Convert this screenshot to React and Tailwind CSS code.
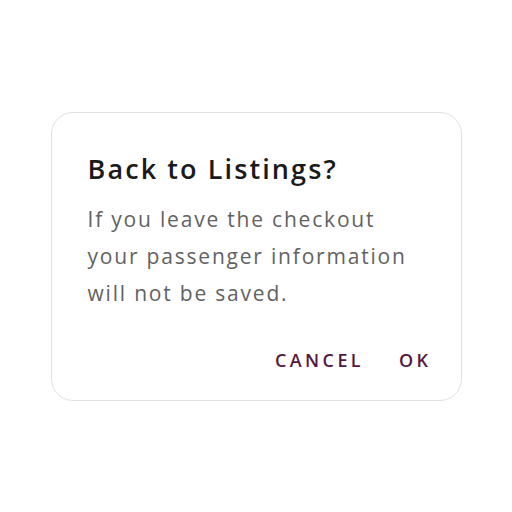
export default function App() {
  return (
    <div className="w-[512px] h-[512px] bg-white flex items-start justify-center pt-[112px]" style={{ fontFamily: "'Open Sans', 'Noto Sans', sans-serif" }}>
      <div className="w-[411px] h-[289px] rounded-[22px] border border-[#e2e2e2] bg-white pl-[36px] pr-[29px] pt-[38px] flex flex-col">
        <h2 className="text-[27px] leading-[36px] font-semibold text-[#1a1a1a] tracking-[2.1px]">Back to Listings?</h2>
        <p className="mt-[14px] text-[21px] leading-[37px] text-[#626262] tracking-[1.8px]">
          If you leave the checkout<br />
          your passenger information<br />
          will not be saved.
        </p>
        <div className="mt-[35px] flex justify-end gap-[35px] text-[18px] font-semibold tracking-[3.4px] text-[#56173f]">
          <button>CANCEL</button>
          <button>OK</button>
        </div>
      </div>
    </div>
  );
}
